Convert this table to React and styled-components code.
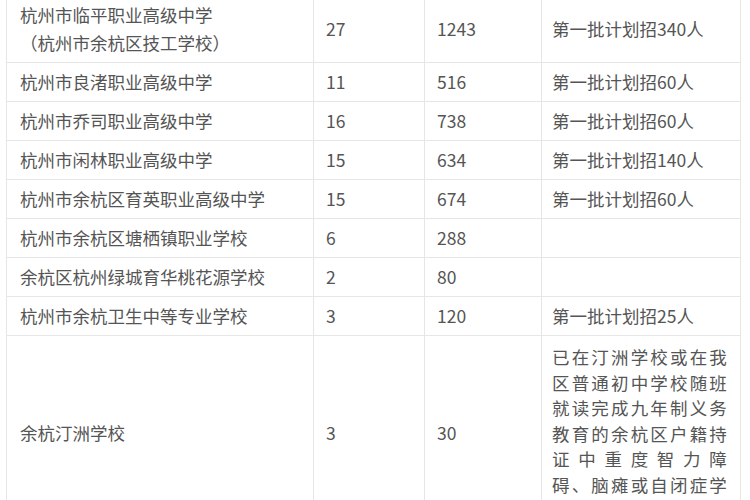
import React from 'react';
import styled, { createGlobalStyle } from 'styled-components';

const GlobalStyle = createGlobalStyle`
  html, body {
    margin: 0;
    padding: 0;
    background: #fff;
  }
  body {
    font-family: "Noto Sans CJK SC", "Noto Sans", sans-serif;
    color: #555;
    overflow: hidden;
  }
`;

const Page = styled.div`
  width: 750px;
  height: 500px;
  overflow: hidden;
  padding: 0 10px 0 6px;
  box-sizing: border-box;
`;

const Table = styled.table`
  margin-top: -5px;
  width: 734px;
  border-collapse: collapse;
  table-layout: fixed;
  font-size: 17.5px;
`;

const Cell = styled.td`
  border: 1px solid #e6e6e6;
  padding: ${p => (p.$note ? '8px 12px 8px 10px' : `5px ${p.$pr || 12}px 5px ${p.$pl || 12}px`)};
  line-height: ${p => (p.$note ? '25.5px' : '28px')};
  vertical-align: middle;
  text-align: left;
  white-space: nowrap;
  overflow: hidden;
`;

const NoteLine = styled.span`
  display: block;
  letter-spacing: 1.2px;
  text-align: ${p => (p.$last ? 'left' : 'justify')};
  text-align-last: ${p => (p.$last ? 'left' : 'justify')};
`;

const rows = [
  { name: ['杭州市临平职业高级中学', '（杭州市余杭区技工学校）'], classes: '27', count: '1243', note: '第一批计划招340人' },
  { name: ['杭州市良渚职业高级中学'], classes: '11', count: '516', note: '第一批计划招60人' },
  { name: ['杭州市乔司职业高级中学'], classes: '16', count: '738', note: '第一批计划招60人' },
  { name: ['杭州市闲林职业高级中学'], classes: '15', count: '634', note: '第一批计划招140人' },
  { name: ['杭州市余杭区育英职业高级中学'], classes: '15', count: '674', note: '第一批计划招60人' },
  { name: ['杭州市余杭区塘栖镇职业学校'], classes: '6', count: '288', note: '' },
  { name: ['余杭区杭州绿城育华桃花源学校'], classes: '2', count: '80', note: '' },
  { name: ['杭州市余杭卫生中等专业学校'], classes: '3', count: '120', note: '第一批计划招25人' },
];

const noteLines = [
  '已在汀洲学校或在我',
  '区普通初中学校随班',
  '就读完成九年制义务',
  '教育的余杭区户籍持',
  '证中重度智力障',
  '碍、脑瘫或自闭症学',
  '生。',
];

export default function App() {
  return (
    <Page>
      <GlobalStyle />
      <Table>
        <colgroup>
          <col style={{ width: 307 }} />
          <col style={{ width: 111 }} />
          <col style={{ width: 117 }} />
          <col style={{ width: 199 }} />
        </colgroup>
        <tbody>
          {rows.map((r, i) => (
            <tr key={i}>
              <Cell $pl={13}>
                {r.name.map((n, j) => (
                  <div key={j}>{n}</div>
                ))}
              </Cell>
              <Cell>{r.classes}</Cell>
              <Cell>{r.count}</Cell>
              <Cell $pl={10}>{r.note}</Cell>
            </tr>
          ))}
          <tr>
            <Cell $pl={13}>余杭汀洲学校</Cell>
            <Cell>3</Cell>
            <Cell>30</Cell>
            <Cell $note>
              {noteLines.map((l, i) => (
                <NoteLine key={i} $last={i === noteLines.length - 1}>
                  {l}
                </NoteLine>
              ))}
            </Cell>
          </tr>
        </tbody>
      </Table>
    </Page>
  );
}
